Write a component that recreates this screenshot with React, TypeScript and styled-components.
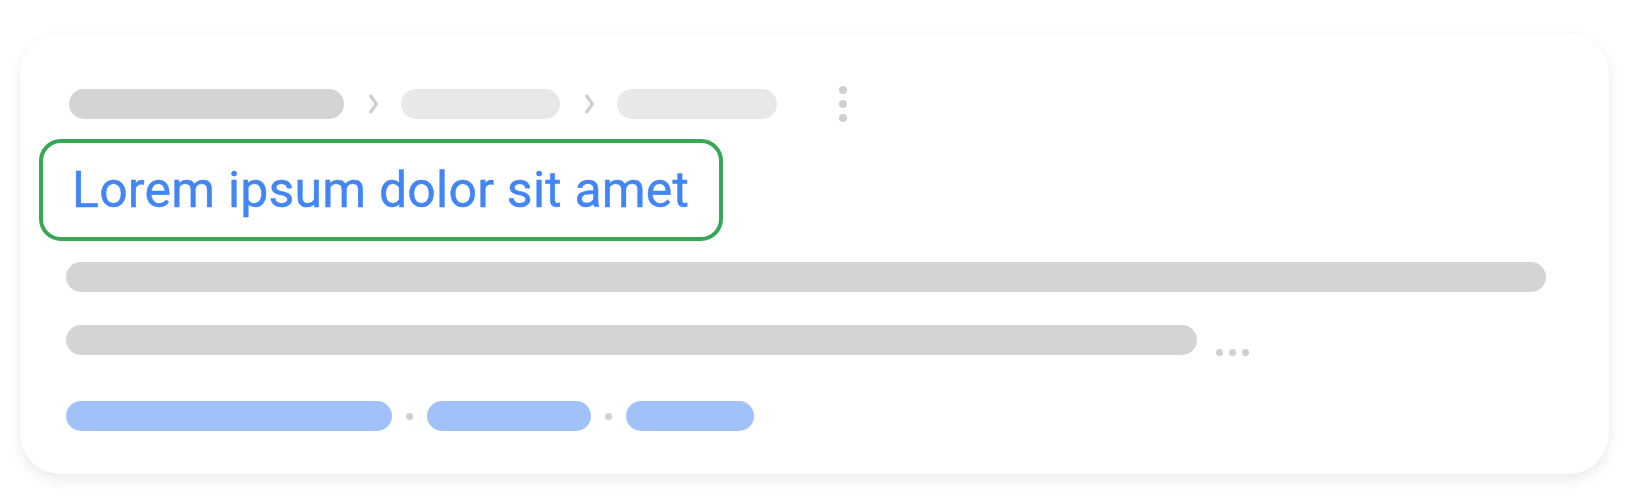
import React from 'react';
import styled, { createGlobalStyle } from 'styled-components';

interface PillProps {
  w: number;
  tone?: 'dark' | 'light' | 'blue';
}

const GlobalStyle = createGlobalStyle`
  html, body {
    margin: 0;
    padding: 0;
    background: #ffffff;
  }
`;

const toneColor = {
  dark: '#d3d4d3',
  light: '#e8e8e8',
  blue: '#a1c2f8',
};

// Styled Components
const Page = styled.div`
  padding: 33px 21px 30px 20px;
  font-family: Roboto, 'Liberation Sans', sans-serif;
`;

const Card = styled.div`
  background: #ffffff;
  border-radius: 40px;
  box-shadow: 0 6px 14px rgba(0, 0, 0, 0.08), 0 0 2px rgba(0, 0, 0, 0.05);
  padding: 56px 46px 43px 46px;
  display: flex;
  flex-direction: column;
  height: 441px;
  box-sizing: border-box;
`;

const Breadcrumbs = styled.div`
  display: flex;
  align-items: center;
  height: 30px;
  padding-left: 3px;
`;

const Pill = styled.div<PillProps>`
  width: ${p => p.w}px;
  height: 30px;
  border-radius: 15px;
  flex-shrink: 0;
  background: ${p => toneColor[p.tone || 'dark']};
`;

const Chevron = styled.svg`
  width: 12px;
  height: 24px;
  margin: 0 22px 0 23px;
  flex-shrink: 0;
`;

const Kebab = styled.div`
  display: flex;
  flex-direction: column;
  gap: 6px;
  margin-left: 62px;
`;

const Dot = styled.span`
  display: block;
  width: 8px;
  height: 8px;
  border-radius: 50%;
  background: #cfcfcf;
`;

const TitleBox = styled.div`
  margin-top: 20px;
  margin-left: -27px;
  align-self: flex-start;
  height: 103px;
  box-sizing: border-box;
  border: 4px solid #34a853;
  border-radius: 22px;
  padding: 0 30px 0 29px;
  display: flex;
  align-items: center;
`;

const Title = styled.h1`
  margin: 0;
  font-size: 50px;
  font-weight: 400;
  color: #4285f4;
  letter-spacing: 0.2px;
  white-space: nowrap;
  -webkit-text-stroke: 0.4px #4285f4;
`;

const Bar = styled.div<{ w: number; top: number }>`
  width: ${p => p.w}px;
  height: 30px;
  border-radius: 15px;
  background: #d3d4d3;
  margin-top: ${p => p.top}px;
  flex-shrink: 0;
`;

const BarRow = styled.div`
  display: flex;
  align-items: flex-end;
  margin-top: 33px;
`;

const Ellipsis = styled.div`
  display: flex;
  gap: 6px;
  margin-left: 19px;
  margin-bottom: -1px;

  ${Dot} {
    width: 7px;
    height: 7px;
  }
`;

const LinkRow = styled.div`
  display: flex;
  align-items: center;
  margin-top: 46px;
`;

const Sep = styled.span`
  width: 7px;
  height: 7px;
  border-radius: 50%;
  background: #cfcfcf;
  margin: 0 14px;
  flex-shrink: 0;
`;

const ChevronIcon = () => (
  <Chevron viewBox="0 0 12 24">
    <path d="M3 3 L9.5 12 L3 21" fill="none" stroke="#cfcfcf" strokeWidth="3.2" strokeLinecap="butt" strokeLinejoin="miter" />
  </Chevron>
);

const App: React.FC = () => {
  return (
    <Page>
      <GlobalStyle />
      <Card>
        <Breadcrumbs>
          <Pill w={275} tone="dark" />
          <ChevronIcon />
          <Pill w={159} tone="light" />
          <ChevronIcon />
          <Pill w={160} tone="light" />
          <Kebab>
            <Dot />
            <Dot />
            <Dot />
          </Kebab>
        </Breadcrumbs>

        <TitleBox>
          <Title>Lorem ipsum dolor sit amet</Title>
        </TitleBox>

        <Bar w={1480} top={21} />

        <BarRow>
          <Bar w={1131} top={0} />
          <Ellipsis>
            <Dot />
            <Dot />
            <Dot />
          </Ellipsis>
        </BarRow>

        <LinkRow>
          <Pill w={326} tone="blue" />
          <Sep />
          <Pill w={164} tone="blue" />
          <Sep />
          <Pill w={128} tone="blue" />
        </LinkRow>
      </Card>
    </Page>
  );
};

export default App;
